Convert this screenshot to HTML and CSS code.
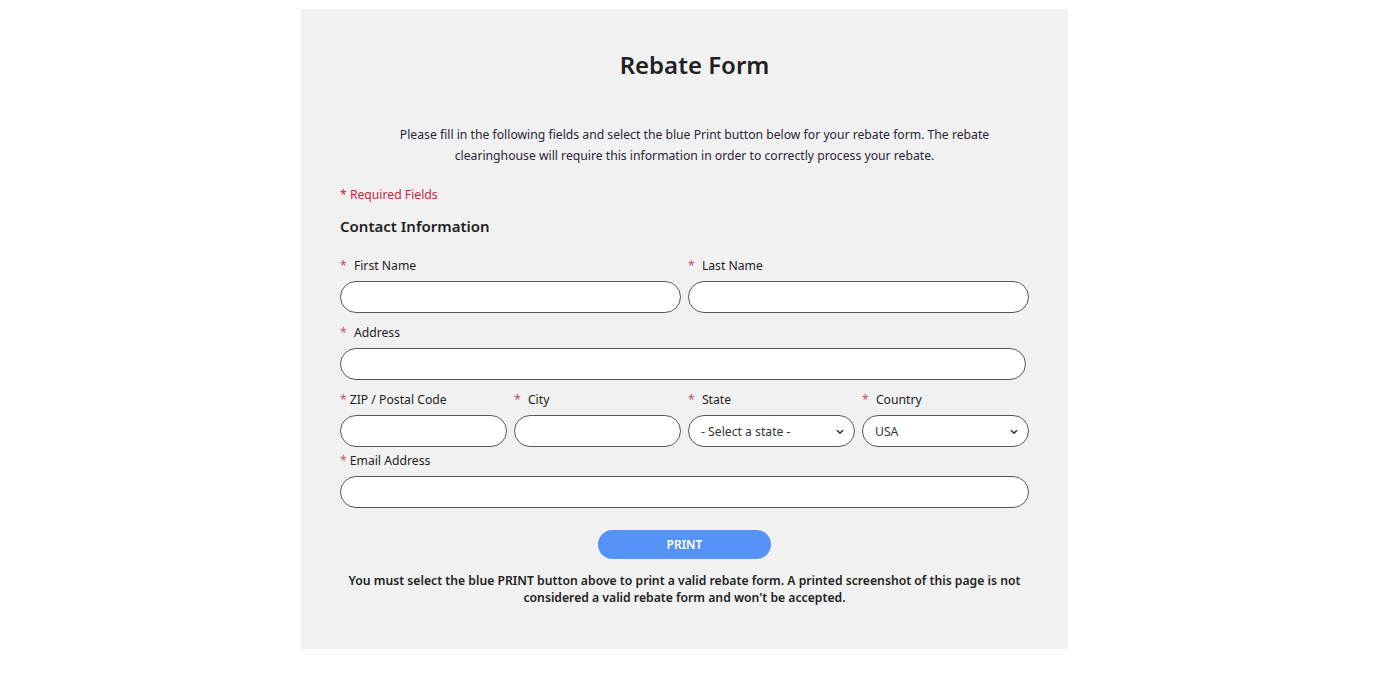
FILE: index.html
```html
<!DOCTYPE html>
<html lang="en">

<head>
    <meta charset="UTF-8">
    <meta name="viewport" content="width=device-width, initial-scale=1.0">
    <title>Rebate Form</title>
    <link rel="stylesheet" href="styles.css">
</head>

<body>
    <div class="rebate-container">
        <h1>Rebate Form</h1>
        <p class="intro">Please fill in the following fields and select the blue Print button below for your rebate form. The rebate clearinghouse will require this information in order to correctly process your rebate.</p>

        <div class="required-note">* Required Fields</div>
        <h2>Contact Information</h2>

        <form id="rebateForm">
            <div class="form-row cols-2">
                <div class="form-group">
                    <label for="firstName"><span class="req">*</span> First Name</label>
                    <input type="text" id="firstName" name="firstName">
                </div>
                <div class="form-group">
                    <label for="lastName"><span class="req">*</span> Last Name</label>
                    <input type="text" id="lastName" name="lastName">
                </div>
            </div>
            <div class="form-row address-row">
                <div class="form-group">
                    <label for="address"><span class="req">*</span> Address</label>
                    <input type="text" id="address" name="address">
                </div>
            </div>
            <div class="form-row cols-4">
                <div class="form-group">
                    <label for="zip"><span class="req tight">*</span>ZIP / Postal Code</label>
                    <input type="text" id="zip" name="zip">
                </div>
                <div class="form-group">
                    <label for="city"><span class="req">*</span> City</label>
                    <input type="text" id="city" name="city">
                </div>
                <div class="form-group">
                    <label for="state"><span class="req">*</span> State</label>
                    <div class="select-wrap">
                        <select id="state" name="state">
                            <option value="">- Select a state -</option>
                        </select>
                        <svg class="chevron" width="8" height="6" viewBox="0 0 8 6"><path d="M1 1.2 L4 4.2 L7 1.2" fill="none" stroke="#333" stroke-width="1.6"/></svg>
                    </div>
                </div>
                <div class="form-group">
                    <label for="country"><span class="req">*</span> Country</label>
                    <div class="select-wrap">
                        <select id="country" name="country">
                            <option value="USA">USA</option>
                        </select>
                        <svg class="chevron" width="8" height="6" viewBox="0 0 8 6"><path d="M1 1.2 L4 4.2 L7 1.2" fill="none" stroke="#333" stroke-width="1.6"/></svg>
                    </div>
                </div>
            </div>
            <div class="form-row email-row">
                <div class="form-group">
                    <label for="email"><span class="req tight">*</span>Email Address</label>
                    <input type="email" id="email" name="email">
                </div>
            </div>

            <div class="print-area">
                <button type="submit">PRINT</button>
            </div>
        </form>

        <p class="warning">You must select the blue PRINT button above to print a valid rebate form. A printed screenshot of this page is not considered a valid rebate form and won't be accepted.</p>
    </div>
</body>

</html>
```

FILE: styles.css
```css
body {
    font-family: "Noto Sans", "Open Sans", sans-serif;
    background-color: #fff;
    margin: 0;
    padding: 9px 0 0 301px;
    color: #222;
}

.rebate-container {
    background: #f1f1f1;
    width: 767px;
    height: 640px;
    box-sizing: border-box;
    padding: 0 39px;
}

.rebate-container h1 {
    margin: 0;
    padding: 38px 0 0 20px;
    font-size: 24px;
    font-weight: 600;
    line-height: 36px;
    text-align: center;
    color: #1f1f24;
}

.intro {
    margin: 41px 0 0;
    padding-left: 20px;
    font-size: 12.2px;
    line-height: 21px;
    text-align: center;
    color: #2a2438;
}

.required-note {
    margin-top: 19px;
    font-size: 12.2px;
    line-height: 20px;
    color: #c8243f;
}

.rebate-container h2 {
    margin: 10px 0 0;
    font-size: 15px;
    font-weight: 600;
    line-height: 22px;
    color: #222;
}

#rebateForm {
    margin-top: 18px;
}

.form-row {
    display: grid;
    gap: 7px;
    margin-bottom: 9px;
}

.cols-2 {
    grid-template-columns: 1fr 1fr;
}

.cols-4 {
    grid-template-columns: repeat(4, 1fr);
    margin-bottom: 3px;
}

.address-row {
    width: 686px;
}

.email-row {
    margin-bottom: 0;
}

.form-group label {
    display: block;
    font-size: 12.2px;
    line-height: 20px;
    padding-top: 1px;
    margin-bottom: 5px;
    color: #222;
}

.req {
    color: #c0506a;
    margin-right: 4px;
}

.req.tight {
    margin-right: 3px;
}

.form-group input,
.form-group select {
    width: 100%;
    height: 32px;
    box-sizing: border-box;
    border: 1px solid #555a60;
    border-radius: 16px;
    background: #fff;
    font-family: inherit;
    font-size: 12.2px;
    color: #333;
    padding: 0 13px;
    outline: none;
}

.form-group select {
    appearance: none;
    -webkit-appearance: none;
    padding: 0 26px 0 12px;
}

.select-wrap {
    position: relative;
}

.chevron {
    position: absolute;
    right: 11px;
    top: 14px;
    pointer-events: none;
}

.print-area {
    display: flex;
    justify-content: center;
    margin-top: 22px;
}

.print-area button {
    width: 173px;
    height: 29px;
    border: none;
    border-radius: 15px;
    background-color: #5593f8;
    color: #fff;
    font-family: inherit;
    font-size: 12px;
    font-weight: 600;
    cursor: pointer;
}

.warning {
    margin: 13px 0 0;
    font-size: 12.2px;
    font-weight: 600;
    line-height: 17px;
    text-align: center;
    color: #222;
}
```
